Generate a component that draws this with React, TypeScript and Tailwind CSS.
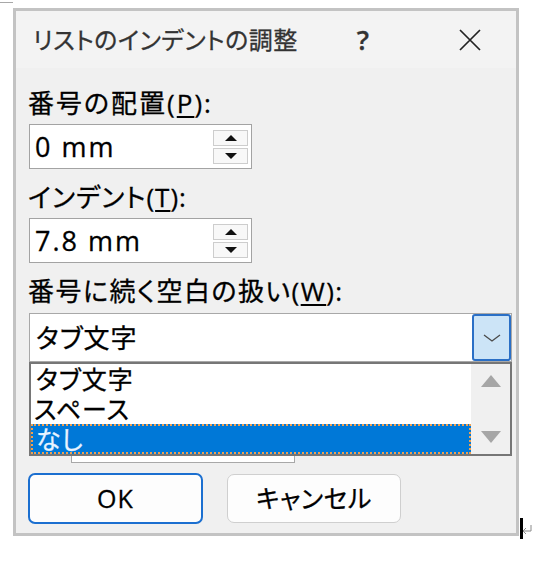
import React from "react";

function SpinBox({ value }: { value: string }) {
  return (
    <div className="ml-px w-[223px] h-[45px] border border-[#a3a3a3] bg-white flex items-center">
      <span className="pl-[5px] text-[27px] leading-none tracking-[2px] font-['Open_Sans',sans-serif]">{value}</span>
      <div className="ml-auto mr-[3px] flex flex-col gap-[2px]">
        <div className="w-[35px] h-[16px] border border-[#cdcdcd] bg-[#f8f8f8] flex items-center justify-center">
          <svg width="12" height="6" viewBox="0 0 12 6"><polygon points="0,6 6,0 12,6" fill="#111" /></svg>
        </div>
        <div className="w-[35px] h-[16px] border border-[#cdcdcd] bg-[#f8f8f8] flex items-center justify-center">
          <svg width="12" height="6" viewBox="0 0 12 6"><polygon points="0,0 12,0 6,6" fill="#111" /></svg>
        </div>
      </div>
    </div>
  );
}

export default function App() {
  return (
    <div className="w-[543px] h-[562px] bg-white overflow-hidden text-black font-['Open_Sans','Noto_Sans_CJK_JP',sans-serif] [font-feature-settings:'palt'] [-webkit-text-stroke:0.3px]">
      <div className="pt-[2px]">
        <div className="h-px w-[13px] bg-[#a8a8a8]" />
      </div>
      <div className="mt-[5px] flex">
        <div className="ml-[13px] w-[506px] h-[528px] border-[3px] border-[#c3c3c3] bg-[#f0f0f0] flex flex-col">
          {/* Title bar */}
          <div className="h-[57px] bg-[#f3f3f3] flex items-center text-[#333]">
            <div className="w-[338px] pl-[17px] text-[24px] leading-none tracking-[0.5px]">リストのインデントの調整</div>
            <div className="w-[18px] text-center text-[27px] leading-none font-semibold font-['Open_Sans',sans-serif]">?</div>
            <svg className="ml-[87px]" width="22" height="22" viewBox="0 0 22 22">
              <path d="M1 1 L21 21 M21 1 L1 21" stroke="#222" strokeWidth="1.7" fill="none" />
            </svg>
          </div>
          {/* Body */}
          <div className="pl-[12px] pt-[20px] flex flex-col text-[26px]">
            <div className="leading-[30px] tracking-[2px]">
              番号の配置(<span className="underline underline-offset-[3px]">P</span>):
            </div>
            <div className="mt-[6px]">
              <SpinBox value="0 mm" />
            </div>
            <div className="mt-[13px] leading-[30px] tracking-[1px]">
              インデント(<span className="underline underline-offset-[3px]">T</span>):
            </div>
            <div className="mt-[6px]">
              <SpinBox value="7.8 mm" />
            </div>
            <div className="mt-[13px] leading-[30px] tracking-[1.5px]">
              番号に続く空白の扱い(<span className="underline underline-offset-[3px]">W</span>):
            </div>
            {/* Combo box */}
            <div className="mt-[7px] ml-px w-[483px] h-[49px] border border-[#a8a8a8] bg-white flex items-center">
              <span className="pl-[6px] leading-none tracking-[1px]">タブ文字</span>
              <div className="ml-auto w-[39px] h-[47px] rounded-[3px] border-2 border-[#2a6fc6] bg-[#cce4f7] flex items-center justify-center">
                <svg width="18" height="8" viewBox="0 0 18 8">
                  <polyline points="1,1 9,7 17,1" stroke="#4a4a4a" strokeWidth="1.3" fill="none" />
                </svg>
              </div>
            </div>
            {/* Drop list */}
            <div className="ml-px w-[483px] h-[94px] border-2 border-[#767676] bg-white flex">
              <div className="flex-1 flex flex-col">
                <div className="h-[30px] flex items-center pl-[5px] text-[25px] leading-[26px] tracking-[1px]">タブ文字</div>
                <div className="h-[30px] flex items-center pl-[3px] text-[25px] leading-[26px] tracking-[1px]">スペース</div>
                <div className="h-[30px] flex items-center pl-[3px] text-[25px] leading-[26px] tracking-[1px] bg-[#0078d7] text-[#e8f3ff] border-2 border-dotted border-[#f0a050]">なし</div>
              </div>
              <div className="w-[39px] bg-[#f0f0f0] flex flex-col items-center justify-between py-[11px]">
                <svg width="20" height="12" viewBox="0 0 20 12"><polygon points="0,12 10,0 20,12" fill="#a6a6a6" /></svg>
                <svg width="20" height="12" viewBox="0 0 20 12"><polygon points="0,0 20,0 10,12" fill="#a6a6a6" /></svg>
              </div>
            </div>
            <div className="ml-[43px] w-[224px] h-[7px] bg-white border-x border-b border-[#a8a8a8]" />
            {/* Buttons */}
            <div className="mt-[10px] flex items-start gap-[24px] text-[25px]">
              <div className="w-[175px] h-[51px] rounded-[7px] border-2 border-[#1b6fd0] bg-[#fdfdfd] flex items-center justify-center leading-none tracking-[1px]">
                OK
              </div>
              <div className="mt-px w-[174px] h-[49px] rounded-[7px] border border-[#cfcfcf] bg-[#fdfdfd] flex items-center justify-center leading-none tracking-[0.5px]">
                キャンセル
              </div>
            </div>
          </div>
        </div>
        <div className="pt-[510px] flex items-start">
          <div className="ml-px w-[3px] h-[21px] bg-black" />
          <svg className="-ml-[1px] mt-[7px]" width="10" height="10" viewBox="0 0 10 10">
            <path d="M9 0 V6 H1 M1 6 L4 3 M1 6 L4 9" stroke="#8a8a8a" strokeWidth="1" fill="none" />
          </svg>
        </div>
      </div>
    </div>
  );
}
